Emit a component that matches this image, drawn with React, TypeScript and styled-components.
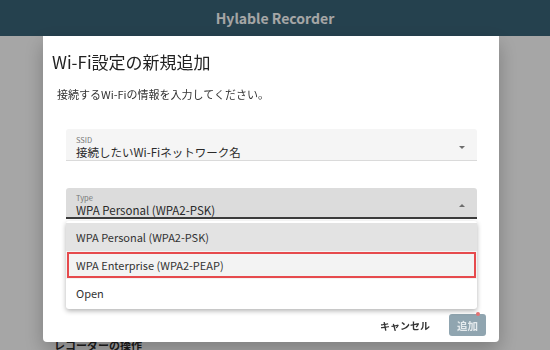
import React from "react";
import styled, { createGlobalStyle } from "styled-components";

const GlobalStyle = createGlobalStyle`
  html, body {
    margin: 0;
    padding: 0;
    background: #ffffff;
    font-family: "Noto Sans CJK JP", "Noto Sans", sans-serif;
    overflow: hidden;
  }
`;

const Page = styled.div`
  width: 550px;
  height: 350px;
  display: flex;
  flex-direction: column;
  background: #ffffff;
`;

const AppBar = styled.header`
  height: 36px;
  background: #3a6478;
  display: flex;
  align-items: center;
  justify-content: center;
  color: #ffffff;
  font-size: 14px;
  font-weight: 700;
`;

const PageBody = styled.main`
  flex: 1;
  display: flex;
  flex-direction: column;
  justify-content: flex-end;
  padding: 0 0 0 54px;
`;

const SectionHeading = styled.h3`
  margin: 0 0 -3px;
  font-size: 11px;
  font-weight: 700;
  color: #2e2e2e;
`;

const Overlay = styled.div`
  position: fixed;
  inset: 0;
  background: rgba(0, 0, 0, 0.35);
  display: flex;
  align-items: flex-start;
  padding: 36px 0 0 43px;
`;

const Dialog = styled.div`
  position: relative;
  width: 456px;
  height: 306px;
  background: #ffffff;
  border-radius: 0 0 4px 4px;
  box-shadow: 0 8px 20px rgba(0, 0, 0, 0.25);
  display: flex;
  flex-direction: column;
`;

const Title = styled.h2`
  margin: 0;
  padding: 13px 9px 0;
  font-size: 17px;
  font-weight: 400;
  color: #222222;
`;

const Content = styled.div`
  flex: 1;
  display: flex;
  flex-direction: column;
  padding: 12px 22px 0 14px;
`;

const Lead = styled.p`
  margin: 0 0 27px;
  font-size: 11px;
  color: #333333;
`;

const FieldList = styled.div`
  display: flex;
  flex-direction: column;
  gap: 27px;
  padding-left: 9px;
`;

const SelectBox = styled.div<{ $open?: boolean }>`
  position: relative;
  height: ${(p) => (p.$open ? "31px" : "32px")};
  box-sizing: border-box;
  padding: 5px 10px 0;
  background: ${(p) => (p.$open ? "#dcdcdc" : "#f5f5f5")};
  border-radius: 3px 3px 0 0;
  border-bottom: ${(p) => (p.$open ? "2px solid #3c3c3c" : "1px solid #dadada")};
  display: flex;
  align-items: center;
`;

const FieldText = styled.div`
  flex: 1;
  display: flex;
  flex-direction: column;
`;

const FieldLabel = styled.span`
  font-size: 7.5px;
  line-height: 9px;
  color: #777777;
`;

const FieldValue = styled.span`
  font-size: 11.5px;
  line-height: 16px;
  color: #2a2a2a;
`;

const Caret = styled.span<{ $up?: boolean }>`
  width: 0;
  height: 0;
  border-left: 3.5px solid transparent;
  border-right: 3.5px solid transparent;
  ${(p) => (p.$up ? "border-bottom: 3.5px solid #6d6d6d;" : "border-top: 3.5px solid #6d6d6d;")}
  margin-right: 2px;
`;

const Menu = styled.ul`
  position: absolute;
  left: 0;
  right: 0;
  top: 33px;
  margin: 0;
  padding: 2px 0;
  list-style: none;
  background: #ffffff;
  border-radius: 3px;
  box-shadow: 0 2px 5px rgba(0, 0, 0, 0.3);
  z-index: 2;
`;

const MenuItem = styled.li<{ $selected?: boolean; $marked?: boolean }>`
  position: relative;
  height: 28px;
  display: flex;
  align-items: center;
  padding: 0 10px;
  font-size: 11px;
  color: #333333;
  background: ${(p) => (p.$selected ? "#e3e3e3" : p.$marked ? "#f3f3f3" : "#ffffff")};

  &::after {
    content: "";
    display: ${(p) => (p.$marked ? "block" : "none")};
    position: absolute;
    inset: 1px 1px 1px 1px;
    border: 2px solid #e64a4d;
  }
`;

const RequiredDot = styled.span`
  position: absolute;
  right: -3px;
  top: 124px;
  width: 4px;
  height: 4px;
  border-radius: 50%;
  background: #e57373;
`;

const Actions = styled.div`
  display: flex;
  justify-content: flex-end;
  align-items: center;
  gap: 19px;
  padding: 0 13px 2px 0;
  height: 30px;
`;

const TextButton = styled.button`
  border: none;
  background: none;
  font-family: inherit;
  font-size: 10px;
  font-weight: 700;
  color: #333333;
  padding: 0;
`;

const SubmitButton = styled.button`
  border: none;
  width: 37px;
  height: 22px;
  border-radius: 3px;
  background: #90a5b0;
  color: #e4eaed;
  font-family: inherit;
  font-size: 10.5px;
  font-weight: 700;
  padding: 0;
`;

const options = [
  "WPA Personal (WPA2-PSK)",
  "WPA Enterprise (WPA2-PEAP)",
  "Open",
];

export default function App() {
  return (
    <>
      <GlobalStyle />
      <Page>
        <AppBar>Hylable Recorder</AppBar>
        <PageBody>
          <SectionHeading>レコーダーの操作</SectionHeading>
        </PageBody>
      </Page>
      <Overlay>
        <Dialog>
          <Title>Wi-Fi設定の新規追加</Title>
          <Content>
            <Lead>接続するWi-Fiの情報を入力してください。</Lead>
            <FieldList>
              <SelectBox>
                <FieldText>
                  <FieldLabel>SSID</FieldLabel>
                  <FieldValue>接続したいWi-Fiネットワーク名</FieldValue>
                </FieldText>
                <Caret />
              </SelectBox>
              <SelectBox $open>
                <FieldText>
                  <FieldLabel>Type</FieldLabel>
                  <FieldValue>WPA Personal (WPA2-PSK)</FieldValue>
                </FieldText>
                <Caret $up />
                <Menu>
                  {options.map((o, i) => (
                    <MenuItem key={o} $selected={i === 0} $marked={i === 1}>
                      {o}
                    </MenuItem>
                  ))}
                </Menu>
                <RequiredDot />
              </SelectBox>
            </FieldList>
          </Content>
          <Actions>
            <TextButton>キャンセル</TextButton>
            <SubmitButton>追加</SubmitButton>
          </Actions>
        </Dialog>
      </Overlay>
    </>
  );
}
